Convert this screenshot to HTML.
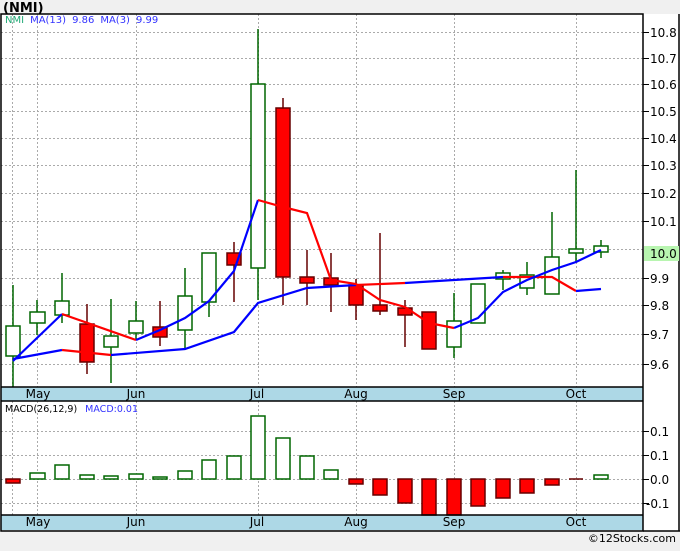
<!DOCTYPE html><html><head><style>body{margin:0;width:680px;height:546px;background:#f0f0f0;overflow:hidden;font-family:"Liberation Sans",Verdana,sans-serif}</style></head><body>
<svg width="680" height="546" xmlns="http://www.w3.org/2000/svg" font-family="DejaVu Sans, Liberation Sans, sans-serif">
<rect x="0" y="0" width="680" height="546" fill="#f0f0f0"/>
<text x="3" y="12" font-size="13" font-weight="bold" fill="#000">(NMI)</text>
<rect x="1" y="14" width="642" height="373" fill="#fff"/>
<rect x="1" y="401" width="642" height="114" fill="#fff"/>
<rect x="643" y="14" width="37" height="517" fill="#fff"/>
<g stroke="#aaa" stroke-dasharray="2,2" stroke-width="1">
<line x1="12.5" y1="14" x2="12.5" y2="387"/><line x1="37.5" y1="14" x2="37.5" y2="387"/><line x1="136.5" y1="14" x2="136.5" y2="387"/><line x1="258.5" y1="14" x2="258.5" y2="387"/><line x1="356.5" y1="14" x2="356.5" y2="387"/><line x1="454.5" y1="14" x2="454.5" y2="387"/><line x1="576.5" y1="14" x2="576.5" y2="387"/>
<line x1="12.5" y1="401" x2="12.5" y2="515"/><line x1="37.5" y1="401" x2="37.5" y2="515"/><line x1="136.5" y1="401" x2="136.5" y2="515"/><line x1="258.5" y1="401" x2="258.5" y2="515"/><line x1="356.5" y1="401" x2="356.5" y2="515"/><line x1="454.5" y1="401" x2="454.5" y2="515"/><line x1="576.5" y1="401" x2="576.5" y2="515"/>
<line x1="1" y1="32.5" x2="643" y2="32.5"/><line x1="1" y1="58.5" x2="643" y2="58.5"/><line x1="1" y1="84.5" x2="643" y2="84.5"/><line x1="1" y1="111.5" x2="643" y2="111.5"/><line x1="1" y1="138.5" x2="643" y2="138.5"/><line x1="1" y1="165.5" x2="643" y2="165.5"/><line x1="1" y1="193.5" x2="643" y2="193.5"/><line x1="1" y1="221.5" x2="643" y2="221.5"/><line x1="1" y1="249.5" x2="643" y2="249.5"/><line x1="1" y1="278.5" x2="643" y2="278.5"/><line x1="1" y1="305.5" x2="643" y2="305.5"/><line x1="1" y1="334.5" x2="643" y2="334.5"/><line x1="1" y1="364.5" x2="643" y2="364.5"/>
<line x1="1" y1="431.5" x2="643" y2="431.5"/><line x1="1" y1="455.5" x2="643" y2="455.5"/><line x1="1" y1="479.5" x2="643" y2="479.5"/><line x1="1" y1="503.5" x2="643" y2="503.5"/>
</g>
<text x="5" y="23" font-size="10"><tspan fill="#2a7">NMI</tspan><tspan fill="#33f" dx="6">MA(13)</tspan><tspan fill="#33f" dx="6">9.86</tspan><tspan fill="#33f" dx="6">MA(3)</tspan><tspan fill="#33f" dx="6">9.99</tspan></text>
<g stroke-width="1.5">
<g stroke="#060" fill="#fff">
<line x1="13" y1="285" x2="13" y2="387"/><rect x="6" y="326" width="14" height="30"/>
<line x1="37" y1="300" x2="37" y2="335"/><rect x="30" y="312" width="15" height="11"/>
<line x1="62" y1="273" x2="62" y2="323"/><rect x="55" y="301" width="14" height="14"/>
<line x1="111" y1="299" x2="111" y2="383"/><rect x="104" y="336" width="14" height="11"/>
<line x1="136" y1="301" x2="136" y2="340"/><rect x="129" y="321" width="14" height="12"/>
<line x1="185" y1="268" x2="185" y2="350"/><rect x="178" y="296" width="14" height="34"/>
<line x1="209" y1="253" x2="209" y2="317"/><rect x="202" y="253" width="14" height="49"/>
<line x1="258" y1="29" x2="258" y2="300"/><rect x="251" y="84" width="14" height="184"/>
<line x1="454" y1="293" x2="454" y2="358"/><rect x="447" y="321" width="14" height="26"/>
<rect x="471" y="284" width="14" height="39"/>
<line x1="503" y1="270" x2="503" y2="290"/><rect x="496" y="273" width="14" height="6"/>
<line x1="527" y1="262" x2="527" y2="295"/><rect x="520" y="275" width="14" height="13"/>
<line x1="552" y1="212" x2="552" y2="294"/><rect x="545" y="257" width="14" height="37"/>
<line x1="576" y1="170" x2="576" y2="262"/><rect x="569" y="249" width="14" height="4"/>
<line x1="601" y1="240" x2="601" y2="258"/><rect x="594" y="246" width="14" height="6"/>
</g>
<g stroke="#600" fill="#f00">
<line x1="87" y1="304" x2="87" y2="374"/><rect x="80" y="324" width="14" height="38"/>
<line x1="160" y1="301" x2="160" y2="346"/><rect x="153" y="327" width="14" height="10"/>
<line x1="234" y1="242" x2="234" y2="302"/><rect x="227" y="253" width="14" height="12"/>
<line x1="283" y1="98" x2="283" y2="305"/><rect x="276" y="108" width="14" height="169"/>
<line x1="307" y1="250" x2="307" y2="305"/><rect x="300" y="277" width="14" height="6"/>
<line x1="331" y1="253" x2="331" y2="312"/><rect x="324" y="278" width="14" height="7"/>
<line x1="356" y1="279" x2="356" y2="320"/><rect x="349" y="285" width="14" height="20"/>
<line x1="380" y1="233" x2="380" y2="315"/><rect x="373" y="305" width="14" height="6"/>
<line x1="405" y1="300" x2="405" y2="347"/><rect x="398" y="308" width="14" height="7"/>
<rect x="422" y="312" width="14" height="37"/>
</g></g>
<g fill="none" stroke-width="2.2">
<polyline stroke="#00f" points="13,359 62,350"/><polyline stroke="#f00" points="62,350 111,355"/><polyline stroke="#00f" points="111,355 185,349 234,332 258,303 307,288 356,285"/><polyline stroke="#f00" points="356,285 405,283"/><polyline stroke="#00f" points="405,283 454,280 503,277"/><polyline stroke="#f00" points="503,277 552,277 576,291"/><polyline stroke="#00f" points="576,291 601,289"/>
<polyline stroke="#00f" points="13,361 62,314"/><polyline stroke="#f00" points="62,314 136,340"/><polyline stroke="#00f" points="136,340 160,330 185,318 209,301 234,271 258,200"/><polyline stroke="#f00" points="258,200 283,207 307,213 331,280 356,284 380,300 405,307 429,323 454,328"/><polyline stroke="#00f" points="454,328 478,318 503,292 527,280 552,270 576,262 601,250"/>
</g>
<rect x="1" y="387" width="642" height="14" fill="#add8e6"/>
<rect x="1" y="515" width="642" height="15" fill="#add8e6"/>
<g font-size="12" fill="#000" text-anchor="middle">
<text x="38" y="398">May</text><text x="136" y="398">Jun</text><text x="257" y="398">Jul</text><text x="356" y="398">Aug</text><text x="454" y="398">Sep</text><text x="576" y="398">Oct</text>
<text x="38" y="526">May</text><text x="136" y="526">Jun</text><text x="257" y="526">Jul</text><text x="356" y="526">Aug</text><text x="454" y="526">Sep</text><text x="576" y="526">Oct</text>
</g>
<text x="5" y="412" font-size="9.5"><tspan fill="#000">MACD(26,12,9)</tspan><tspan fill="#33f" dx="8">MACD:0.01</tspan></text>
<g stroke="#060" fill="#fff" stroke-width="1.5">
<rect x="30" y="473" width="15" height="6"/><rect x="55" y="465" width="14" height="14"/><rect x="80" y="475" width="14" height="4"/><rect x="104" y="476" width="14" height="3"/><rect x="129" y="474" width="14" height="5"/><rect x="153" y="477" width="14" height="2"/><rect x="178" y="471" width="14" height="8"/><rect x="202" y="460" width="14" height="19"/><rect x="227" y="456" width="14" height="23"/><rect x="251" y="416" width="14" height="63"/><rect x="276" y="438" width="14" height="41"/><rect x="300" y="456" width="14" height="23"/><rect x="324" y="470" width="14" height="9"/><rect x="594" y="475" width="14" height="4"/>
</g>
<g stroke="#600" fill="#f00" stroke-width="1.5">
<rect x="6" y="479" width="14" height="4"/><rect x="349" y="479" width="14" height="5"/><rect x="373" y="479" width="14" height="16"/><rect x="398" y="479" width="14" height="24"/><rect x="422" y="479" width="14" height="36"/><rect x="447" y="479" width="14" height="36"/><rect x="471" y="479" width="14" height="27"/><rect x="496" y="479" width="14" height="19"/><rect x="520" y="479" width="14" height="14"/><rect x="545" y="479" width="14" height="6"/><line x1="569" y1="479" x2="583" y2="479"/>
</g>
<g stroke="#000" stroke-width="1.5" fill="none">
<rect x="1" y="14" width="642" height="517"/>
<line x1="1" y1="387" x2="643" y2="387"/><line x1="1" y1="401" x2="643" y2="401"/><line x1="1" y1="515" x2="643" y2="515"/>
<line x1="679" y1="14" x2="679" y2="531"/><line x1="643" y1="531" x2="680" y2="531"/>
</g>
<g stroke="#000" stroke-width="1">
<line x1="643" y1="32.5" x2="649" y2="32.5"/><line x1="643" y1="58.5" x2="649" y2="58.5"/><line x1="643" y1="84.5" x2="649" y2="84.5"/><line x1="643" y1="111.5" x2="649" y2="111.5"/><line x1="643" y1="138.5" x2="649" y2="138.5"/><line x1="643" y1="165.5" x2="649" y2="165.5"/><line x1="643" y1="193.5" x2="649" y2="193.5"/><line x1="643" y1="221.5" x2="649" y2="221.5"/><line x1="643" y1="278.5" x2="649" y2="278.5"/><line x1="643" y1="305.5" x2="649" y2="305.5"/><line x1="643" y1="334.5" x2="649" y2="334.5"/><line x1="643" y1="364.5" x2="649" y2="364.5"/>
<line x1="643" y1="431.5" x2="649" y2="431.5"/><line x1="643" y1="455.5" x2="649" y2="455.5"/><line x1="643" y1="479.5" x2="649" y2="479.5"/><line x1="643" y1="503.5" x2="649" y2="503.5"/>
</g>
<g font-size="12" fill="#000">
<text x="650" y="37">10.8</text><text x="650" y="63">10.7</text><text x="650" y="89">10.6</text><text x="650" y="116">10.5</text><text x="650" y="143">10.4</text><text x="650" y="170">10.3</text><text x="650" y="198">10.2</text><text x="650" y="226">10.1</text><text x="650" y="283">9.9</text><text x="650" y="310">9.8</text><text x="650" y="339">9.7</text><text x="650" y="369">9.6</text>
<text x="650" y="436">0.1</text><text x="650" y="460">0.1</text><text x="650" y="484">0.0</text><text x="646" y="508">-0.1</text>
</g>
<rect x="644" y="246" width="35" height="15" fill="#b8f5b0"/>
<text x="650" y="258" font-size="12" fill="#000">10.0</text>
<text x="676" y="542" font-size="11" fill="#000" text-anchor="end">©12Stocks.com</text>
</svg>
</body></html>
